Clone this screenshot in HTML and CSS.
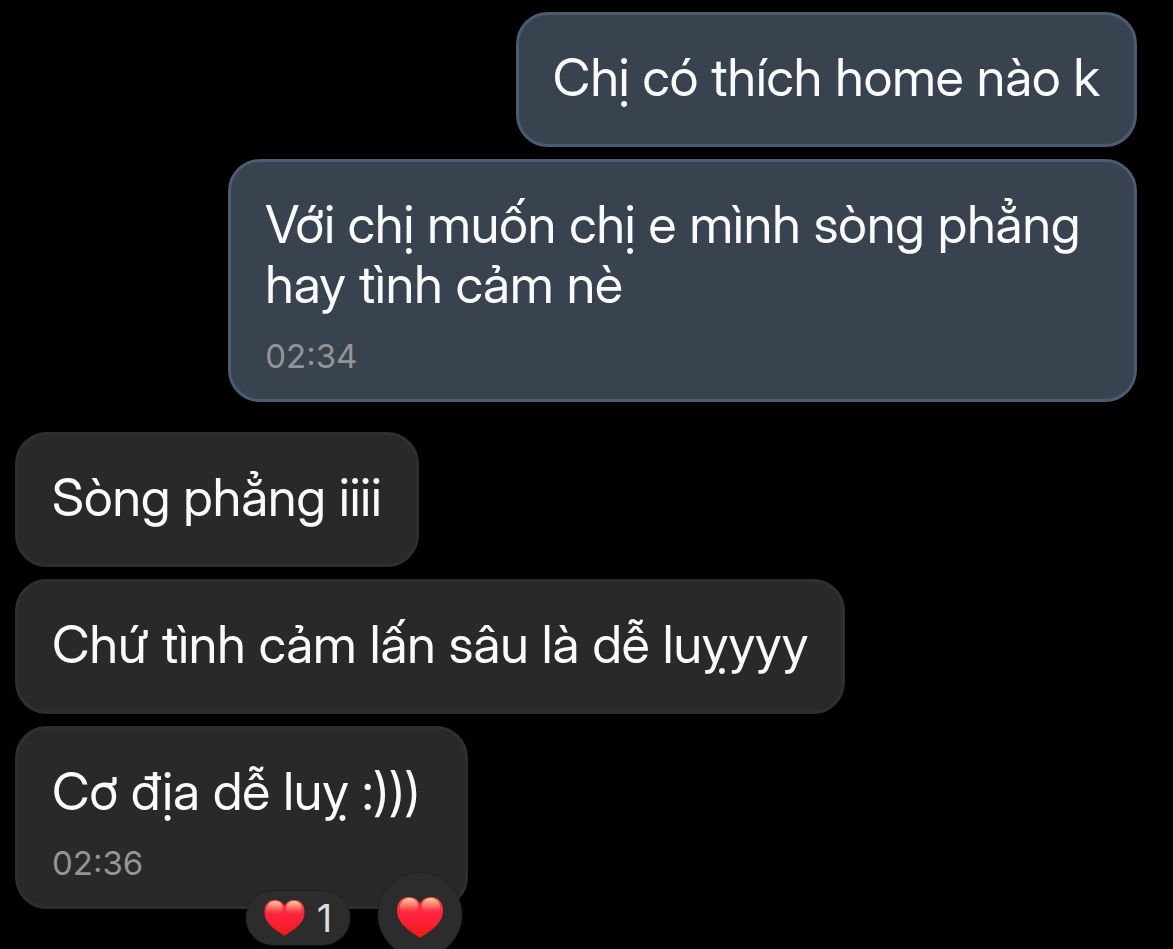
FILE: index.html
```html
<!DOCTYPE html>
<html lang="vi">

<head>
    <meta charset="UTF-8">
    <meta name="viewport" content="width=device-width, initial-scale=1.0">
    <title>Chat</title>
    <link rel="stylesheet" href="styles.css">
</head>

<body>
    <main class="chat">
        <section class="group sent">
            <div class="bubble">
                <p>Chị có thích home nào k</p>
            </div>
            <div class="bubble">
                <p>Với chị muốn chị e mình sòng phẳng hay tình cảm nè</p>
                <time>02:34</time>
            </div>
        </section>
        <section class="group received">
            <div class="bubble">
                <p>Sòng phẳng iiii</p>
            </div>
            <div class="bubble">
                <p>Chứ tình cảm lấn sâu là dễ luỵyyy</p>
            </div>
            <div class="bubble reacted">
                <p>Cơ địa dễ luỵ :)))</p>
                <time>02:36</time>
                <div class="reactions">
                    <button type="button" class="count">
                        <svg class="heart" viewBox="0 0 46 41" aria-hidden="true">
                            <use href="#heart"></use>
                        </svg>
                        <span>1</span>
                    </button>
                    <button type="button" class="react" aria-label="Thả tim">
                        <svg class="heart" viewBox="0 0 46 41" aria-hidden="true">
                            <use href="#heart"></use>
                        </svg>
                    </button>
                </div>
            </div>
        </section>
    </main>
    <svg class="defs" aria-hidden="true">
        <defs>
            <linearGradient id="red" x1="0" y1="0" x2="0" y2="1">
                <stop offset="0" stop-color="#f8453f"></stop>
                <stop offset="0.4" stop-color="#ff2340"></stop>
                <stop offset="0.7" stop-color="#fa1e2e"></stop>
                <stop offset="1" stop-color="#ee1c14"></stop>
            </linearGradient>
            <linearGradient id="shine" x1="0" y1="0" x2="0" y2="1">
                <stop offset="0" stop-color="#ffd9a8" stop-opacity="0.95"></stop>
                <stop offset="0.5" stop-color="#ff9a80" stop-opacity="0.6"></stop>
                <stop offset="1" stop-color="#ff4050" stop-opacity="0"></stop>
            </linearGradient>
            <symbol id="heart" viewBox="0 0 46 41">
                <path fill="url(#red)" d="M23 41C20 38.500 12 34.500 6 28C2 23.500 0 19 0 13.500C0 5 5 0 12 0C17.500 0 21.500 3 23 7C24.500 3 28.500 0 34 0C41 0 46 5 46 13.500C46 19 44 23.500 40 28C34 34.500 26 38.500 23 41Z"></path>
                <path fill="url(#shine)" d="M3 13C2 6 6 1 12 1C18 1 21 5 21 9C21 15 16 17 11 17C6 17 3.500 16 3 13Z"></path>
                <path fill="url(#shine)" d="M43 13C44 6 40 1 34 1C28 1 25 5 25 9C25 15 30 17 35 17C40 17 42.500 16 43 13Z"></path>
            </symbol>
        </defs>
    </svg>
</body>

</html>
```
FILE: styles.css
```css
* {
    margin: 0;
    padding: 0;
    box-sizing: border-box;
}

body {
    min-height: 100vh;
    background: #000;
    color: #fafafa;
    font-family: Inter, "Liberation Sans", sans-serif;
    overflow: hidden;
}

.chat {
    display: flex;
    flex-direction: column;
    gap: 30px;
    min-height: 100vh;
    padding: 12px 36px 0 15px;
}

.group {
    display: flex;
    flex-direction: column;
    align-items: flex-start;
    gap: 12px;
}

.sent {
    align-items: flex-end;
}

.bubble {
    position: relative;
    max-width: 81%;
    padding: 33px 34px 36px;
    border: 3px solid #2f2f2f;
    border-radius: 32px;
    background: #292929;
}

.sent .bubble {
    border-color: #4a5b72;
    background: #394350;
}

/* keeps room for the reaction buttons */
.reacted {
    min-width: 453px;
}

.bubble p {
    font-family: "Inter Display", Inter, sans-serif;
    font-size: 52px;
    line-height: 60px;
}

.bubble time {
    display: block;
    margin-top: 21px;
    color: #949494;
    font-size: 33px;
    line-height: 40px;
}

.bubble:has(time) {
    padding-bottom: 23px;
}

.reactions {
    position: absolute;
    top: 144px;
    right: 3px;
    display: flex;
    align-items: center;
    gap: 28px;
}

.reactions button {
    display: flex;
    align-items: center;
    justify-content: center;
    gap: 12px;
    border: none;
    background: #2c2c2c;
    box-shadow: 0 0 3px #1c1c1c;
    color: #ddd;
    font: 38px Inter, sans-serif;
}

.reactions .count {
    width: 104px;
    height: 54px;
    margin-top: 6px;
    border-radius: 27px;
}

.reactions .react {
    width: 84px;
    height: 84px;
    padding-top: 5px;
    border-radius: 50%;
}

.heart {
    width: 46px;
    height: 41px;
}

.count .heart {
    width: 41px;
    height: 36px;
}

.defs {
    position: absolute;
    width: 0;
    height: 0;
}
```
